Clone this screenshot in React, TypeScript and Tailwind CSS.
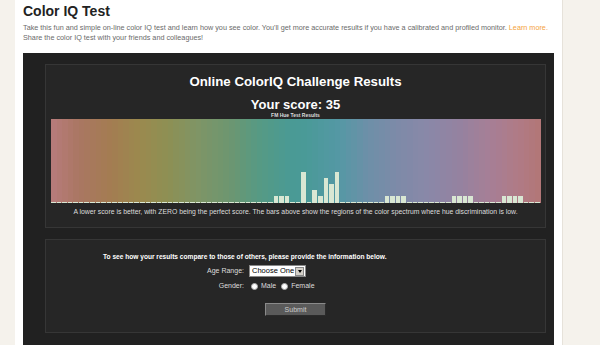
import React from 'react'

// spectrum colour stops: [position 0..1, hex]
const stops: [number, string][] = [
  [0, '#b77b7b'],
  [0.057, '#aa7663'],
  [0.119, '#a47c52'],
  [0.18, '#9b894e'],
  [0.24, '#8d9054'],
  [0.3, '#7f9566'],
  [0.364, '#6d9670'],
  [0.425, '#569a84'],
  [0.487, '#4a9a94'],
  [0.523, '#4a9a98'],
  [0.589, '#5598a5'],
  [0.65, '#6e8fa8'],
  [0.71, '#7e8aa8'],
  [0.773, '#8a88a8'],
  [0.834, '#9582a0'],
  [0.896, '#a67f96'],
  [0.957, '#b07a85'],
  [1, '#b27676'],
]

const hex = (h: string) => [1, 3, 5].map((i) => parseInt(h.slice(i, i + 2), 16))

function colorAt(t: number) {
  for (let i = 1; i < stops.length; i++) {
    const [p1, c1] = stops[i]
    const [p0, c0] = stops[i - 1]
    if (t <= p1) {
      const k = (t - p0) / (p1 - p0)
      const a = hex(c0)
      const b = hex(c1)
      const rgb = a.map((v, j) => Math.round(v + (b[j] - v) * k))
      return `rgb(${rgb.join(',')})`
    }
  }
  return stops[stops.length - 1][1]
}

const COLS = 88
const scores: Record<number, number> = {
  40: 1, 41: 1, 42: 1, 45: 5, 47: 2, 48: 1, 49: 4, 50: 3, 51: 5,
  60: 1, 61: 1, 62: 1, 63: 1,
  72: 1, 73: 1, 74: 1, 75: 1,
  81: 1, 82: 1, 83: 1, 84: 1,
}

function Spectrum() {
  return (
    <div className="flex h-[84px] w-[489px]">
      {Array.from({ length: COLS }).map((_, i) => {
        const v = scores[i] ?? 0
        return (
          <div
            key={i}
            className="flex flex-1 items-end"
            style={{ backgroundColor: colorAt((i + 0.5) / COLS) }}
          >
            <div
              className="mr-px w-full bg-[#d9e7d3]"
              style={{ height: v ? v * 6 + 1 : 1 }}
            />
          </div>
        )
      })}
    </div>
  )
}

function Radio({ label }: { label: string }) {
  return (
    <div className="flex items-center gap-[3px]">
      <div className="h-[7px] w-[7px] rounded-full border border-[#aaa] bg-white" />
      <span>{label}</span>
    </div>
  )
}

export default function App() {
  return (
    <div className="min-h-[345px] w-[600px] bg-[#f5f2ec] font-['Liberation_Sans',Arial,sans-serif]">
      <div className="ml-[15px] w-[548px] border-r border-[#e6e2da] bg-white px-2">
        <h1 className="pt-[2px] text-[14px] font-bold leading-[18px] text-[#222]">Color IQ Test</h1>
        <p className="mt-[3px] text-[7.25px] leading-[10px] text-[#6a6a6a]">
          Take this fun and simple on-line color IQ test and learn how you see color. You'll get more accurate results if you have a calibrated and profiled monitor.{' '}
          <span className="text-[#f4a23c]">Learn more.</span>
          <br />
          Share the color IQ test with your friends and colleagues!
        </p>

        <div className="mt-[10px] bg-[#212121] pb-[20px] pl-[22px] pr-[8px] pt-[11px]">
          {/* results */}
          <div className="flex flex-col items-center border border-[#363636] bg-[#262626] pb-[10px] pt-[9px] text-white">
            <div className="text-[13.25px] font-bold leading-[16px]">Online ColorIQ Challenge Results</div>
            <div className="mt-[7px] text-[13px] font-bold leading-[16px]">Your score: 35</div>
            <div className="-mt-px text-[5px] font-bold leading-[6px] text-[#ddd]">FM Hue Test Results</div>
            <div className="mt-[1px]">
              <Spectrum />
            </div>
            <div className="mt-[4px] text-[6.85px] leading-[10px] text-[#ddd]">
              A lower score is better, with ZERO being the perfect score. The bars above show the regions of the color spectrum where hue discrimination is low.
            </div>
          </div>

          {/* demographic form */}
          <div className="mt-[11px] border border-[#363636] bg-[#262626] pb-[16px] pt-[12px] text-[7px] text-[#ddd]">
            <div className="pl-[57px] text-[6.6px] font-bold leading-[10px] text-white">
              To see how your results compare to those of others, please provide the information below.
            </div>
            <div className="mt-[3px] flex items-center">
              <div className="w-[198px] text-right">Age Range:</div>
              <div className="ml-[5px] flex h-[12px] w-[57px] items-center border border-[#888] bg-white pl-[2px] text-[7.5px] text-black">
                <span className="flex-1">Choose One</span>
                <div className="mr-px flex h-[9px] w-[9px] items-center justify-center border border-[#888] bg-[#d4d0c8]">
                  <div className="h-0 w-0 border-x-[2.5px] border-t-[3px] border-x-transparent border-t-black" />
                </div>
              </div>
            </div>
            <div className="mt-[4px] flex items-center">
              <div className="w-[198px] text-right">Gender:</div>
              <div className="ml-[7px] flex items-center gap-[5px]">
                <Radio label="Male" />
                <Radio label="Female" />
              </div>
            </div>
            <div className="mt-[11px] flex justify-center">
              <button className="h-[13px] w-[61px] border border-b-[#2a2a2a] border-l-[#8a8a8a] border-r-[#2a2a2a] border-t-[#8a8a8a] bg-[#5a5a5a] text-[7px] leading-[11px] text-[#ccc]">
                Submit
              </button>
            </div>
          </div>
        </div>
      </div>
    </div>
  )
}
